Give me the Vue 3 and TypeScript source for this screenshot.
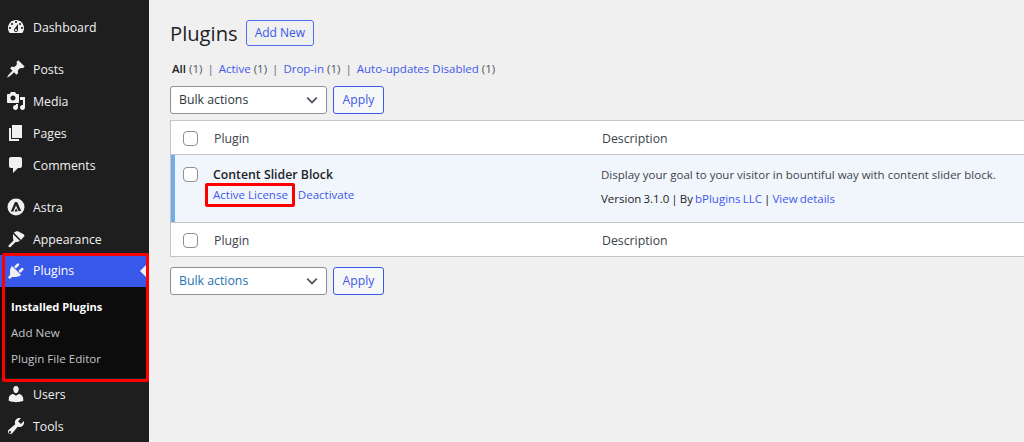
<script setup lang="ts">
interface Item { label: string; icon: string; gap?: boolean }
const topItems: Item[] = [
  { label: 'Dashboard', icon: 'dash' },
  { label: 'Posts', icon: 'pin', gap: true },
  { label: 'Media', icon: 'media' },
  { label: 'Pages', icon: 'pages' },
  { label: 'Comments', icon: 'comment' },
  { label: 'Astra', icon: 'astra', gap: true },
  { label: 'Appearance', icon: 'brush' },
]
const bottomItems: Item[] = [
  { label: 'Users', icon: 'user' },
  { label: 'Tools', icon: 'wrench' },
]
const paths: Record<string, string> = {
  dash: 'M3.760 16h12.480c1.100-1.370 1.760-3.110 1.760-5 0-4.420-3.580-8-8-8s-8 3.580-8 8c0 1.890.66 3.630 1.760 5zM10 4c.55 0 1 .45 1 1s-.45 1-1 1-1-.45-1-1 .45-1 1-1zM6 6c.55 0 1 .45 1 1s-.45 1-1 1-1-.45-1-1 .45-1 1-1zm8 0c.55 0 1 .45 1 1s-.45 1-1 1-1-.45-1-1 .45-1 1-1zm-5.370 5.550L12 7v6c0 1.100-.9 2-2 2s-2-.9-2-2c0-.57.24-1.080.63-1.450zM4 10c.55 0 1 .45 1 1s-.45 1-1 1-1-.45-1-1 .45-1 1-1zm12 0c.55 0 1 .45 1 1s-.45 1-1 1-1-.45-1-1 .45-1 1-1zm-5 3c0-.55-.45-1-1-1s-1 .45-1 1 .45 1 1 1 1-.45 1-1z',
  pin: 'M10.440 3.020l1.820-1.820 6.360 6.350-1.830 1.820c-1.050-.68-2.480-.57-3.410.36l-.75.75c-.92.93-1.040 2.350-.35 3.410l-1.830 1.820-2.410-2.410-2.800 2.790c-.42.42-3.380 2.710-3.800 2.290s1.860-3.390 2.280-3.810l2.790-2.790L4.100 9.360l1.830-1.820c1.050.69 2.480.57 3.400-.36l.75-.75c.930-.92 1.050-2.350.36-3.410z',
  media: 'M13 11V4c0-.55-.45-1-1-1h-1.670L9 1H5L3.670 3H2c-.55 0-1 .45-1 1v7c0 .55.45 1 1 1h10c.55 0 1-.45 1-1zM7 4.500c1.380 0 2.500 1.120 2.500 2.500S8.380 9.500 7 9.500 4.500 8.380 4.500 7 5.620 4.500 7 4.500zM14 6h5v10.500c0 1.380-1.120 2.500-2.500 2.500S14 17.880 14 16.500s1.120-2.500 2.500-2.500c.17 0 .34.020.5.050V9h-3V6zm-4 8.050V13h2v3.500c0 1.380-1.120 2.500-2.500 2.500S7 17.880 7 16.500 8.120 14 9.500 14c.17 0 .34.020.5.050z',
  pages: 'M6 15V2h10v13H6zm-1 1h8v2H3V5h2v11z',
  comment: 'M5 2h9c1.100 0 2 .9 2 2v7c0 1.100-.9 2-2 2h-2l-5 5v-5H5c-1.100 0-2-.9-2-2V4c0-1.100.9-2 2-2z',
  astra: 'M10 1.500a8.500 8.500 0 1 0 0 17 8.500 8.500 0 0 0 0-17zM9 5h2.200l4 9h-2.700L10 8.600 7.300 14.500H4.800zm1.200 6.200 1.500 3.300H8.500z',
  brush: 'M8 3.800C9 2.500 11 2 12.500 2.500L18 5.500l.5 1.500L15 11zM7 5l7 7-3 1H9.500l-5 5c-1 .8-2.500-.5-2-1.500l5-5L7 9z',
  plug: 'M13.110 4.360L9.870 7.600 8 5.730l3.240-3.240c.35-.34 1.050-.2 1.560.32.520.51.660 1.210.310 1.550zm-8 1.770l.91-1.120 9.010 9.010-1.190.84c-.71.71-2.630 1.160-3.820 1.160H6.140L4.900 17.260c-.59.59-1.540.59-2.120 0-.59-.58-.59-1.530 0-2.120l1.240-1.240v-3.880c0-1.130.4-3.140 1.090-3.890zm7.260 3.970l3.240-3.240c.34-.35 1.040-.21 1.550.31.520.51.66 1.210.31 1.550l-3.240 3.250z',
  user: 'M10 9.250c-2.270 0-2.730-3.440-2.730-3.440C7 4.020 7.820 2 9.970 2c2.160 0 2.980 2.020 2.710 3.810 0 0-.41 3.440-2.680 3.440zm0 2.570L12.720 10c2.390 0 4.520 2.330 4.520 4.530v2.490s-3.650 1.130-7.240 1.130c-3.650 0-7.240-1.130-7.240-1.130v-2.490c0-2.250 1.940-4.480 4.480-4.480z',
  wrench: 'M16.680 9.770c-1.340 1.340-3.300 1.670-4.950.99l-5.410 6.520c-.99.99-2.590.99-3.580 0s-.99-2.590 0-3.570l6.520-5.420c-.68-1.650-.35-3.610.99-4.950 1.280-1.280 3.120-1.640 4.730-1.070l-2.900 2.900 2.830 2.830 2.900-2.900c.57 1.610.21 3.450-1.070 4.730zM4.800 16.900a1.100 1.100 0 1 0-1.600-1.600 1.100 1.100 0 0 0 1.600 1.600z',
}
const filters = [
  { label: 'All', count: 1, current: true },
  { label: 'Active', count: 1 },
  { label: 'Drop-in', count: 1 },
  { label: 'Auto-updates Disabled', count: 1 },
]
</script>

<template>
  <div class="page">
    <aside class="side">
      <a v-for="it in topItems" :key="it.label" class="item" :class="{ gap: it.gap }">
        <svg class="ico" viewBox="0 0 20 20"><path :d="paths[it.icon]" fill-rule="evenodd" /></svg>
        <span>{{ it.label }}</span>
      </a>
      <div class="plugins-wrap">
        <a class="item active">
          <svg class="ico" viewBox="0 0 20 20"><path :d="paths.plug" fill-rule="evenodd" /></svg>
          <span>Plugins</span>
          <i class="notch"></i>
        </a>
        <div class="submenu">
          <a class="sub strong">Installed Plugins</a>
          <a class="sub">Add New</a>
          <a class="sub">Plugin File Editor</a>
        </div>
      </div>
      <a v-for="it in bottomItems" :key="it.label" class="item">
        <svg class="ico" viewBox="0 0 20 20"><path :d="paths[it.icon]" fill-rule="evenodd" /></svg>
        <span>{{ it.label }}</span>
      </a>
    </aside>
    <main class="main">
      <div class="head">
        <h1>Plugins</h1>
        <a class="add">Add New</a>
      </div>
      <ul class="filters">
        <li v-for="(f, i) in filters" :key="f.label">
          <b v-if="f.current">{{ f.label }}</b><a v-else>{{ f.label }}</a>
          <span class="count">({{ f.count }})</span>
          <span v-if="i < filters.length - 1" class="sep">|</span>
        </li>
      </ul>
      <div class="actions">
        <div class="select"><span>Bulk actions</span><svg viewBox="0 0 20 20"><path d="M4 7 10 13 16 7" /></svg></div>
        <button class="apply">Apply</button>
      </div>
      <div class="table">
        <div class="row th">
          <span class="check"></span>
          <span class="col1">Plugin</span>
          <span class="col2">Description</span>
        </div>
        <div class="row plugin">
          <span class="check"></span>
          <div class="col1">
            <strong>Content Slider Block</strong>
            <div class="links"><a class="boxed">Active License</a><a>Deactivate</a></div>
          </div>
          <div class="col2">
            <p class="desc">Display your goal to your visitor in bountiful way with content slider block.</p>
            <p class="meta">Version 3.1.0 | By <a>bPlugins LLC</a> | <a>View details</a></p>
          </div>
        </div>
        <div class="row th foot">
          <span class="check"></span>
          <span class="col1">Plugin</span>
          <span class="col2">Description</span>
        </div>
      </div>
      <div class="actions lower">
        <div class="select"><span>Bulk actions</span><svg viewBox="0 0 20 20"><path d="M4 7 10 13 16 7" /></svg></div>
        <button class="apply">Apply</button>
      </div>
    </main>
  </div>
</template>

<style>
html, body { margin: 0; background: #f0f0f0; overflow: hidden; }
</style>

<style scoped>
.page { display: flex; width: 1024px; height: 442px; overflow: hidden; font-family: "Open Sans", "Noto Sans", sans-serif; font-size: 11.500px; color: #3c434a; }
.side { width: 149px; flex: none; background: #1e1e1e; padding-top: 11px; box-sizing: border-box; color: #f0f0f1; }
.item { position: relative; display: flex; align-items: center; height: 32px; color: #f0f0f1; font-size: 12.300px; }
.item.gap { margin-top: 10px; }
.ico { width: 20px; height: 20px; margin: 0 7px 0 6px; fill: #f0f0f1; flex: none; }
.plugins-wrap { position: relative; height: 123px; }
.plugins-wrap::after { content: ""; position: absolute; left: 2px; top: -2px; right: 0; bottom: -4px; border: 3px solid #f00; border-radius: 2px; box-sizing: border-box; pointer-events: none; z-index: 1; }
.active { background: #3858e9; color: #fff; }
.active span { margin-top: -1px; }
.notch { position: absolute; right: 3px; top: 10px; border: 6px solid transparent; border-right-color: #f0f0f1; border-left: 0; }
.submenu { background: #0c0c0c; padding-top: 7px; height: 91px; box-sizing: border-box; }
.sub { display: block; height: 26px; line-height: 26px; padding-left: 11px; font-size: 11.600px; color: #c3c4c7; }
.sub.strong { color: #fff; font-weight: 700; font-size: 11.100px; }
.main { flex: 1; min-width: 0; padding: 20px 0 0 21px; }
.head { display: flex; align-items: center; height: 26px; }
h1 { margin: 0; font-size: 20.200px; font-weight: 400; color: #1d2327; }
.add { margin-left: 8px; border: 1px solid #4f6cec; border-radius: 3px; color: #3858e9; height: 24px; line-height: 24px; padding: 0 8px; font-size: 12px; font-weight: 500; }
.filters { list-style: none; display: flex; margin: 14px 0 0 2px; padding: 0; height: 18px; line-height: 18px; font-size: 11.500px; color: #50575e; white-space: nowrap; }
.filters b { color: #1d2327; font-weight: 600; }
.filters a, .links a, .meta a { color: #4358ea; }
.count { margin-left: 3px; }
.sep { margin: 0 5px; color: #646970; }
.actions { display: flex; gap: 6px; margin-top: 8px; height: 28px; }
.select { width: 157px; height: 28px; box-sizing: border-box; border: 1px solid #8c8f94; border-radius: 3px; background: #fff; display: flex; align-items: center; justify-content: space-between; padding: 0 6px 0 8px; font-size: 12.300px; line-height: 24px; color: #2c3338; }
.select svg { width: 16px; height: 16px; fill: none; stroke: #50575e; stroke-width: 2.200; }
.lower { margin-top: 10px; }
.lower .select { color: #2271b1; }
.apply { width: 51px; height: 28px; padding: 0 0 1px; box-sizing: border-box; border: 1px solid #3858e9; border-radius: 3px; background: #f6f7f7; color: #4358ea; font: inherit; font-size: 12.200px; }
.table { margin-top: 6px; border: 1px solid #c3c4c7; background: #fff; width: 900px; }
.row { display: flex; position: relative; }
.th { height: 32px; padding-top: 1px; align-items: center; font-size: 12.300px; color: #3c434a; }
.th:first-child { border-bottom: 1px solid #c3c4c7; }
.foot { border-top: 1px solid #c3c4c7; }
.plugin { height: 67px; background: #f0f6fc; box-shadow: inset 4px 0 0 #72aee6; }
.check { width: 15px; height: 15px; box-sizing: border-box; border: 1px solid #8c8f94; border-radius: 4px; background: #fff; margin-left: 12px; flex: none; }
.plugin .check { margin-top: 12px; }
.col1 { width: 388px; margin-left: 16px; flex: none; }
.plugin .col1 { margin-left: 15px; padding-top: 11px; }
.plugin strong { display: block; font-size: 12.300px; font-weight: 600; color: #1d2327; line-height: 18px; }
.links { display: flex; gap: 10px; margin-top: 2px; line-height: 18px; }
.boxed { position: relative; }
.boxed::after { content: ""; position: absolute; left: -8px; right: -7px; top: -3px; bottom: -3px; border: 3px solid #f00; border-radius: 2px; }
.plugin .col2 { padding-top: 11px; }
.plugin p { margin: 0; line-height: 18px; white-space: nowrap; }
.desc { color: #3c434a; }
.plugin .meta { margin-top: 6px; color: #1d2327; word-spacing: -0.900px; }
</style>
